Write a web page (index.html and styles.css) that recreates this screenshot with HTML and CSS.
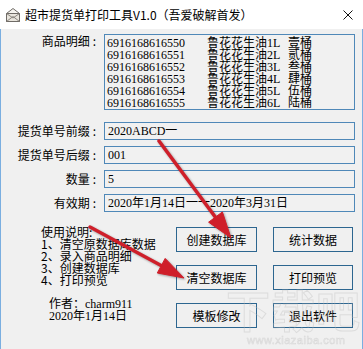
FILE: index.html
```html
<!DOCTYPE html>
<html lang="zh-CN">
<head>
<meta charset="utf-8">
<title>超市提货单打印工具</title>
<link rel="stylesheet" href="styles.css">
</head>
<body>
<div class="window">
  <div class="titlebar">
    <svg class="app-icon" viewBox="0 0 16 16" aria-hidden="true">
      <path d="M1.5 6.5 L8 1.5 L14.5 6.5 Z" fill="#f6f4ef" stroke="#6f6b66" stroke-width="1"/>
      <rect x="1.5" y="6.5" width="13" height="8" fill="#e9e5dd" stroke="#6f6b66" stroke-width="1"/>
      <path d="M1.5 14.5 L8 9.5 L14.5 14.5" fill="none" stroke="#8a857e" stroke-width="1"/>
      <path d="M1.5 6.5 L8 11 L14.5 6.5" fill="none" stroke="#8a857e" stroke-width="1"/>
    </svg>
    <span class="title">超市提货单打印工具V1.0（吾爱破解首发）</span>
    <svg class="close" viewBox="0 0 10 10" aria-hidden="true">
      <path d="M0.5 0.5 L9.5 9.5 M9.5 0.5 L0.5 9.5" stroke="#111" stroke-width="1" fill="none"/>
    </svg>
  </div>

  <div class="client">
    <div class="row row-details">
      <div class="lbl">商品明细<span class="colon">:</span></div>
      <div class="memo">
        <div class="item"><span class="code">6916168616550</span><span class="name">鲁花花生油1L</span><span class="qty">壹桶</span></div>
        <div class="item"><span class="code">6916168616551</span><span class="name">鲁花花生油2L</span><span class="qty">贰桶</span></div>
        <div class="item"><span class="code">6916168616552</span><span class="name">鲁花花生油3L</span><span class="qty">叁桶</span></div>
        <div class="item"><span class="code">6916168616553</span><span class="name">鲁花花生油4L</span><span class="qty">肆桶</span></div>
        <div class="item"><span class="code">6916168616554</span><span class="name">鲁花花生油5L</span><span class="qty">伍桶</span></div>
        <div class="item"><span class="code">6916168616555</span><span class="name">鲁花花生油6L</span><span class="qty">陆桶</span></div>
      </div>
    </div>

    <div class="row row-field first">
      <div class="lbl">提货单号前缀<span class="colon">:</span></div>
      <div class="field">2020ABCD一</div>
    </div>
    <div class="row row-field">
      <div class="lbl">提货单号后缀<span class="colon">:</span></div>
      <div class="field">001</div>
    </div>
    <div class="row row-field">
      <div class="lbl">数量<span class="colon">:</span></div>
      <div class="field">5</div>
    </div>
    <div class="row row-field">
      <div class="lbl">有效期<span class="colon">:</span></div>
      <div class="field">2020年1月14日一一2020年3月31日</div>
    </div>

    <div class="bottom">
      <div class="notes">
        <div class="usage">
          <div>使用说明:</div>
          <div>1、清空原数据库数据</div>
          <div>2、录入商品明细</div>
          <div>3、创建数据库</div>
          <div>4、打印预览</div>
        </div>
        <div class="author">
          <div>作者：charm911</div>
          <div>2020年1月14日</div>
        </div>
      </div>
      <div class="buttons">
        <button class="btn">创建数据库</button>
        <button class="btn">统计数据</button>
        <button class="btn">清空数据库</button>
        <button class="btn">打印预览</button>
        <button class="btn">模板修改</button>
        <button class="btn">退出软件</button>
      </div>
    </div>
  </div>

  <div class="watermark" aria-hidden="true">
    <div class="wm-big">下载吧</div>
    <div class="wm-url">www.xiazaiba.com</div>
  </div>

  <svg class="arrows" viewBox="0 0 363 349" aria-hidden="true">
    <g fill="#cf1f2a" stroke="#cf1f2a">
      <line x1="159" y1="141" x2="216" y2="218" stroke-width="3.5" stroke-linecap="round"/>
      <polygon points="231,238 208.6,222.2 222.4,211.9" stroke-width="1" stroke-linejoin="round"/>
      <line x1="90" y1="227" x2="162" y2="266" stroke-width="3.5" stroke-linecap="round"/>
      <polygon points="184,278 157.3,273 165.2,258.4" stroke-width="1" stroke-linejoin="round"/>
    </g>
  </svg>
</div>
</body>
</html>
```

FILE: styles.css
```css
* {
  box-sizing: border-box;
}

html,
body {
  margin: 0;
  padding: 0;
}

body {
  width: 363px;
  height: 349px;
  overflow: hidden;
  background: #f0f0f0;
  font-family: "Noto Sans CJK SC", sans-serif;
  font-size: 12px;
  color: #000;
}

.window {
  position: relative;
  width: 363px;
  height: 349px;
}

/* title bar */
.titlebar {
  height: 29px;
  background: #fff;
  display: flex;
  align-items: center;
  padding: 0 10px 0 5px;
}

.app-icon {
  width: 16px;
  height: 16px;
  flex: none;
}

.title {
  flex: 1;
  margin-left: 4px;
  font-size: 12px;
  line-height: 14px;
  color: #000;
}

.close {
  width: 10px;
  height: 10px;
  flex: none;
}

/* client area */
.client {
  height: 320px;
  background: #f0f0f0;
  border-left: 1px solid #7aaee0;
  border-right: 1px solid #7aaee0;
}

.row {
  display: flex;
}

.lbl {
  width: 96px;
  flex: none;
  text-align: right;
  line-height: 14px;
  white-space: nowrap;
}

.colon {
  margin-left: 3px;
  margin-right: 1px;
}

.row-details {
  padding-top: 5px;
}

.memo {
  margin-left: 7px;
  width: 251px;
  height: 76px;
  border: 1px solid #4f88b8;
  background: #f1f1f1;
  padding: 2px 0 0 2px;
  font-family: "Liberation Serif", "Noto Sans CJK SC", serif;
  font-size: 12px;
  line-height: 12px;
}

.item {
  display: flex;
  height: 12px;
  white-space: nowrap;
}

.code {
  width: 100px;
  flex: none;
}

.name {
  width: 81px;
  flex: none;
}

.row-field {
  margin-top: 6px;
  align-items: center;
}

.row-field.first {
  margin-top: 12px;
}

.field {
  margin-left: 7px;
  width: 251px;
  height: 18px;
  border: 1px solid #4f88b8;
  background: #f1f1f1;
  padding-left: 3px;
  font-family: "Liberation Serif", "Noto Sans CJK SC", serif;
  font-size: 12px;
  line-height: 16px;
  white-space: nowrap;
}

/* bottom area */
.bottom {
  display: flex;
  margin-top: 14px;
}

.notes {
  width: 175px;
  flex: none;
  padding-left: 40px;
}

.usage {
  line-height: 12px;
  white-space: nowrap;
}

.author {
  margin-top: 12px;
  padding-left: 8px;
  font-family: "Liberation Serif", "Noto Sans CJK SC", serif;
  line-height: 12px;
  white-space: nowrap;
}

.buttons {
  display: grid;
  grid-template-columns: 81px 80px;
  grid-auto-rows: 25px;
  column-gap: 16px;
  row-gap: 13px;
  margin-top: 1px;
}

.btn {
  margin: 0;
  padding: 0;
  border: 1px solid #2d6690;
  border-radius: 0;
  background: #f0f0f0;
  font-family: "Noto Sans CJK SC", sans-serif;
  font-size: 12px;
  line-height: 14px;
  color: #000;
  display: flex;
  align-items: center;
  justify-content: center;
}

/* overlays */
.watermark {
  position: absolute;
  left: 226px;
  top: 284px;
  pointer-events: none;
  opacity: 0.35;
}

.wm-big {
  font-family: "Noto Sans CJK SC", sans-serif;
  font-size: 44px;
  line-height: 50px;
  font-weight: 700;
  color: transparent;
  -webkit-text-stroke: 1px #b8b8b8;
  letter-spacing: 1px;
}

.wm-url {
  margin-left: 21px;
  font-family: "Liberation Sans", sans-serif;
  font-size: 11px;
  line-height: 12px;
  color: transparent;
  -webkit-text-stroke: 0.6px #b0b0b0;
  letter-spacing: 0.5px;
}

.arrows {
  position: absolute;
  left: 0;
  top: 0;
  width: 363px;
  height: 349px;
  pointer-events: none;
  filter: drop-shadow(1px 1px 1px rgba(0, 0, 0, 0.35));
}
```
